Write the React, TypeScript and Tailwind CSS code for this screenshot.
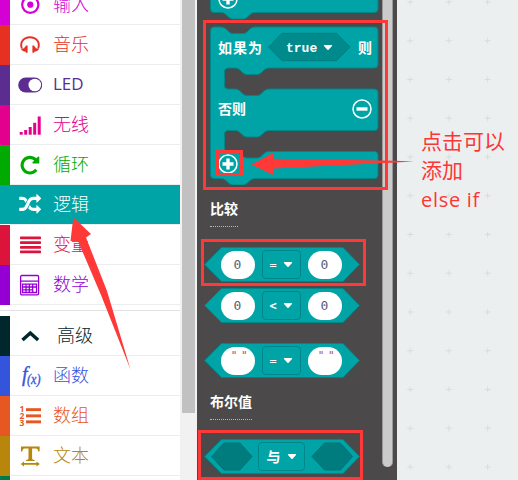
import React from "react";

const SHUFFLE =
  "M666 481q-60 92-137 273-22-45-37-72.5t-40.5-63.5-51-56.5-63-35-81.5-14.5h-224q-14 0-23-9t-9-23v-192q0-14 9-23t23-9h224q250 0 410 225zm1126 799q0 14-9 23l-320 320q-9 9-23 9-13 0-22.5-9.5t-9.5-22.5v-192q-32 0-85 .5t-81 1-73-1-71-5-64-10.5-63-18.5-58-28.5-59-40-55-53.5-56-69.5q59-93 136-273 22 45 37 72.5t40.5 63.5 51 56.5 63 35 81.5 14.5h256v-192q0-14 9-23t23-9q12 0 24 10l319 319q9 9 9 23zm0-896q0 14-9 23l-320 320q-9 9-23 9-13 0-22.5-9.5t-9.5-22.5v-192h-256q-48 0-87 15t-69 45-51 61.5-45 77.5q-32 62-78 171-29 66-49.5 111t-54 105-64 100-74 83-90 68.5-106.5 42-128 16.5h-224q-14 0-23-9t-9-23v-192q0-14 9-23t23-9h224q48 0 87-15t69-45 51-61.5 45-77.5q32-62 78-171 29-66 49.5-111t54-105 64-100 74-83 90-68.5 106.5-42 128-16.5h256v-192q0-14 9-23t23-9q12 0 24 10l319 319q9 9 9 23z";
const REPEAT =
  "M1664 256v448q0 26-19 45t-45 19h-448q-42 0-59-40-17-39 14-69l138-138q-148-137-349-137-104 0-198.5 40.5t-163.5 109.5-109.5 163.5-40.5 198.5 40.5 198.5 109.5 163.5 163.5 109.5 198.5 40.5q119 0 225-52t179-147q7-10 23-12 15 0 25 9l137 138q9 8 9.5 20.5t-7.5 22.5q-109 132-264 204.5t-327 72.5q-156 0-298-61t-245-164-164-245-61-298 61-298 164-245 245-164 298-61q147 0 284.5 55.5t244.5 156.5l130-129q29-31 70-14 39 17 39 59z";

// Every icon is drawn in a 24x24 box and takes the category's colour.
const icons: Record<string, React.ReactNode> = {
  input: (
    <>
      <circle cx="12.300" cy="11.700" r="8.100" fill="none" stroke="currentColor" strokeWidth="2.200" />
      <circle cx="12.300" cy="11.700" r="3.100" />
    </>
  ),
  music: (
    <>
      <path d="M3.800 15.500C1.500 9 6 4.300 12 4.300s10.500 4.700 8.200 11.200" fill="none" stroke="currentColor" strokeWidth="1.900" />
      <path d="M9.600 12.600v7.200H7.800v-1C5.500 18.500 3.500 17.500 3 15.700l3.200-.4c.4-1.200 1-1.900 1.600-2v-.7zM14.400 12.600v7.200h1.800v-1c2.300-.3 4.300-1.300 4.800-3.100l-3.200-.4c-.4-1.200-1-1.900-1.600-2v-.7z" />
    </>
  ),
  toggle: (
    <>
      <rect x="0.200" y="4.500" width="24" height="15" rx="7.500" />
      <circle cx="16.800" cy="12" r="6.300" fill="#fff" />
    </>
  ),
  signal: (
    <>
      <rect x="1.700" y="19" width="3" height="2.700" />
      <rect x="6.200" y="17" width="3" height="4.700" />
      <rect x="10.700" y="14" width="3" height="7.700" />
      <rect x="15.200" y="9.800" width="3" height="11.900" />
      <rect x="19.700" y="3.500" width="3" height="18.200" />
    </>
  ),
  loops: <path d={REPEAT} transform="translate(1 1.200) scale(.0122)" />,
  logic: <path d={SHUFFLE} transform="translate(1.200 .7) scale(.0122)" />,
  variables: (
    <>
      <rect x="2" y="3.500" width="21" height="2.800" rx=".7" />
      <rect x="2" y="8.200" width="21" height="2.800" rx=".7" />
      <rect x="2" y="12.900" width="21" height="2.800" rx=".7" />
      <rect x="2" y="17.500" width="21" height="2.800" rx=".7" />
    </>
  ),
  math: (
    <g fill="none" stroke="currentColor" strokeWidth="1.300">
      <rect x="2.600" y="2.500" width="18" height="19.300" rx="1.200" />
      <path d="M2.600 8.200h18M4.500 11.200h14v8.300H4.500zM4.500 14h14M4.500 16.800h9.500M8 11v8.500M11.300 11v8.500M14.700 11v8.500" />
    </g>
  ),
  advanced: <path d="M4.500 16 12.300 9l7.800 7" fill="none" stroke="currentColor" strokeWidth="3.500" />,
  functions: (
    <g className="font-['Liberation_Serif',serif] italic" stroke="currentColor" strokeWidth=".35">
      <text x="4" y="16.500" fontSize="20">f</text>
      <text x="9" y="19.500" fontSize="14" textLength="13.500" lengthAdjust="spacingAndGlyphs">(x)</text>
    </g>
  ),
  arrays: (
    <>
      <g className="font-['Open_Sans',sans-serif] leading-none font-bold" fontSize="8.500">
        <text x="1.600" y="7.800">1</text>
        <text x="1.600" y="15">2</text>
        <text x="1.600" y="22">3</text>
      </g>
      <rect x="8" y="4.200" width="15" height="2.900" />
      <rect x="8" y="10.400" width="15" height="2.900" />
      <rect x="8" y="16.400" width="15" height="2.900" />
    </>
  ),
  text: (
    <>
      <path d="M3 2.500h18.600v5h-1.200c-.5-2-.9-3.100-2.400-3.100h-3.900v10.200c0 1 .7 1.100 2.500 1.300v1.200H8v-1.200c1.800-.2 2.500-.3 2.500-1.300V4.400H6.600c-1.500 0-1.900 1.100-2.400 3.100H3z" />
      <path d="M2.800 19.900 6 17.400v1.700h12.500v-1.700l3.300 2.500-3.300 2.500v-1.700H6v1.700z" />
    </>
  ),
};

interface Category {
  name: string;
  icon: string;
  strip: string;
  tint: string;
}

const basic: Category[] = [
  { name: "输入", icon: "input", strip: "bg-[#d400d4]", tint: "text-[#d400d4]" },
  { name: "音乐", icon: "music", strip: "bg-[#e63022]", tint: "text-[#e63022]" },
  { name: "LED", icon: "toggle", strip: "bg-[#5c2d91]", tint: "text-[#5c2d91]" },
  { name: "无线", icon: "signal", strip: "bg-[#e3008c]", tint: "text-[#e3008c]" },
  { name: "循环", icon: "loops", strip: "bg-[#00aa00]", tint: "text-[#00aa00]" },
  { name: "逻辑", icon: "logic", strip: "bg-[#00a4a6]", tint: "text-white" },
  { name: "变量", icon: "variables", strip: "bg-[#dc143c]", tint: "text-[#dc143c]" },
  { name: "数学", icon: "math", strip: "bg-[#9400d3]", tint: "text-[#9400d3]" },
];
const more: Category[] = [
  { name: "高级", icon: "advanced", strip: "bg-[#00272b]", tint: "text-[#00272b]" },
  { name: "函数", icon: "functions", strip: "bg-[#3455db]", tint: "text-[#3455db]" },
  { name: "数组", icon: "arrays", strip: "bg-[#e65722]", tint: "text-[#e65722]" },
  { name: "文本", icon: "text", strip: "bg-[#b8860b]", tint: "text-[#b8860b]" },
  { name: "", icon: "", strip: "bg-[#007a4b]", tint: "" },
];

function Row({ item }: { item: Category }) {
  const active = item.icon === "logic";
  const wide = item.icon === "advanced";
  return (
    <div className="flex h-10 shrink-0">
      <div className={`w-2.5 ${active ? "h-[39px]" : "h-10"} ${item.strip}`} />
      <div
        className={`flex flex-1 items-center border-b border-[#ecedee] pl-2 ${item.tint} ${active ? "bg-[#00a4a6]" : "bg-white"}`}
      >
        <svg width="24" height="24" viewBox="0 0 24 24" fill="currentColor" className="shrink-0">
          {icons[item.icon]}
        </svg>
        <span
          className={`pb-[3px] leading-none whitespace-nowrap ${item.name === "LED" ? "font-['Open_Sans',sans-serif] text-[17px]" : "text-[18px] font-light"} ${wide ? "ml-[15px]" : "ml-[11px]"}`}
        >
          {item.name}
        </span>
      </div>
    </div>
  );
}

function Sidebar() {
  return (
    <aside className="flex w-[197px] shrink-0 overflow-hidden bg-[#f1f1f1]">
      <div className="-mt-[15px] flex w-[180px] flex-col bg-white">
        {basic.map((c) => (
          <Row key={c.name} item={c} />
        ))}
        <div className="mb-[5px] h-1.5 shrink-0 border-b border-[#dfe1e2]" />
        {more.map((c) => (
          <Row key={c.icon} item={c} />
        ))}
      </div>
      <div className="ml-0.5 h-[413px] w-[13px] bg-[#c1c1c1]" />
    </aside>
  );
}

function Caret() {
  return (
    <svg width="10" height="7" viewBox="0 0 10 7">
      <path d="M1.300 1h7.400q.8.300.3 1L5.600 5.700q-.6.500-1.200 0L1 2q-.5-.7.300-1" fill="#fff" />
    </svg>
  );
}

function Badge({ minus }: { minus?: boolean }) {
  return (
    <svg width="20" height="20" viewBox="0 0 20 20" stroke="#fff" fill="none">
      <circle cx="10" cy="10" r="9" strokeWidth="1.500" />
      <path d={minus ? "M4.500 10h11" : "M4.500 10h11M10 4.500v11"} strokeWidth="3.400" />
    </svg>
  );
}

function IfBlock() {
  return (
    <div className="relative mt-2 ml-[13px] h-[159px] w-[169px]">
      <svg className="absolute inset-0" width="169" height="159" viewBox="210 26 169 159">
        <path
          d="M214 27h7q3 0 5 2l3 3q2 1.500 4 1.500h10q2 0 4-1.500l3-3q2-2 5-2h119.500q3.500 0 3.500 3.500v34q0 3.500-3.500 3.500H269q-3 0-5 2l-3 3q-2 1.500-4 1.500h-10q-2 0-4-1.500l-3-3q-2-2-5-2h-7q-3.500 0-3.500 3.500v14q0 3.500 3.500 3.500h7q3 0 5 2l3 3q2 1.500 4 1.500h10q2 0 4-1.500l3-3q2-2 5-2h105.500q3.500 0 3.500 3.500v34.500q0 3.500-3.500 3.500H269q-3 0-5 2l-3 3q-2 1.500-4 1.500h-10q-2 0-4-1.500l-3-3q-2-2-5-2h-7q-3.500 0-3.500 3.500v14q0 3.500 3.500 3.500h7q3 0 5 2l3 3q2 1.500 4 1.500h10q2 0 4-1.500l3-3q2-2 5-2h105.500q3.500 0 3.500 3.500v20q0 3.500-3.500 3.500H255q-3 0-5 2l-3 3q-2 1.500-4 1.500h-10q-2 0-4-1.500l-3-3q-2-2-5-2h-7q-3.500 0-3.500-3.500V30.500q0-3.500 3.500-3.500"
          fill="#00a4a6"
          stroke="#008689"
        />
        <path d="M268.500 47 282 33.300h54.500L350 47l-13.500 13.700H282z" fill="#008a8c" stroke="#007f82" />
      </svg>
      <div className="relative flex h-[42px] items-center pl-2 text-[14px] font-bold text-white">
        <span className="w-[68px] tracking-[1px]">如果为</span>
        <span className="mr-[6px] w-[31px] pt-[3px] font-['Liberation_Mono',monospace] text-[13px]">true</span>
        <Caret />
        <span className="ml-[25px]">则</span>
      </div>
      <div className="relative mt-5 flex h-[41px] items-center justify-between pr-[7px] pl-2 text-[14px] font-bold text-white">
        <span>否则</span>
        <Badge minus />
      </div>
      <div className="relative mt-[25px] ml-2">
        <Badge />
      </div>
    </div>
  );
}

function Oval({ children }: { children: string }) {
  const quote = children !== "0";
  return (
    <span
      className={`flex h-[28px] w-[34px] justify-center rounded-[14px] bg-white font-['DejaVu_Sans_Mono',monospace] ${quote ? "items-start pt-px pl-0.5 text-[11px] leading-[15px] tracking-[-1.500px] whitespace-pre text-[#a34f70]" : "items-center pt-px text-[13px] text-[#575e75]"}`}
    >
      {children}
    </span>
  );
}

function HexBlock({ op, value }: { op: string; value?: string }) {
  const slots = value === undefined;
  return (
    <div className="relative h-[35px] w-[156px]">
      <svg className="absolute inset-0" width="156" height="35" viewBox="0 0 156 35">
        <path d="M.7 17.500 17.500.5h121.500l16.500 17-16.500 17H17.500z" fill="#00a4a6" stroke="#008689" />
        {slots && (
          <path d="M7.500 17.500 20 4h16l12 13.500L36 31H20zM108 17.500 120.500 4h16l12 13.500-12 13.500h-16z" fill="#007c7f" stroke="#007376" />
        )}
      </svg>
      <div className={`relative flex h-full items-center ${slots ? "justify-center pr-0.5" : "justify-between pr-[18px] pl-[17px]"}`}>
        {value !== undefined && <Oval>{value}</Oval>}
        <span
          className={`flex h-[29px] items-center justify-between rounded-[4px] border border-[#008689] text-white ${slots ? "w-[47px] pr-[7px] pl-2 text-[14px] font-bold" : "w-[39px] pr-[7px] pl-[7px] font-['DejaVu_Sans_Mono',monospace] text-[12px]"} ${op === "<" ? "font-bold" : ""}`}
        >
          {op}
          <Caret />
        </span>
        {value !== undefined && <Oval>{value}</Oval>}
      </div>
    </div>
  );
}

function Label({ children }: { children: string }) {
  return (
    <div className="ml-[13px] flex">
      <span className="h-[27px] border-b border-dotted border-[#bbb] text-[14px] leading-[17px] font-bold text-white">{children}</span>
    </div>
  );
}

function Flyout() {
  return (
    <section className="flex w-[200px] shrink-0 overflow-hidden bg-[#4b4949]">
      <div className="flex w-[185px] flex-col">
        <div className="relative ml-[13px] h-[18px] shrink-0">
          <svg className="absolute top-0 left-0" width="169" height="20" viewBox="210 0 169 20">
            <path
              d="M210.500-5V9q0 3.500 3.500 3.500h7q3 0 5 2l3 3q2 1.500 4 1.500h10q2 0 4-1.500l3-3q2-2 5-2h119.500q3.500 0 3.500-3.500V-5z"
              fill="#00a4a6"
              stroke="#008689"
            />
          </svg>
          <div className="relative -mt-[11px] ml-2 h-5">
            <Badge />
          </div>
        </div>
        <IfBlock />
        <div className="mt-[15px]">
          <Label>比较</Label>
        </div>
        <div className="mt-5 ml-[6.500px] flex flex-col">
          <HexBlock op="=" value="0" />
          <div className="mt-1.5">
            <HexBlock op="<" value="0" />
          </div>
          <div className="mt-5">
            <HexBlock op="=" value={'" "'} />
          </div>
        </div>
        <div className="mt-[15px]">
          <Label>布尔值</Label>
        </div>
        <div className="mt-[19px] ml-[7px]">
          <HexBlock op="与" />
        </div>
      </div>
      <div className="h-[467px] w-[11px] rounded-b-[5px] border-x border-[#999] bg-[#cbcbcb]" />
    </section>
  );
}

function Workspace() {
  return (
    <main className="flex-1 bg-[#ebeff0]">
      <div className="relative h-full">
        <svg className="absolute inset-0 h-full w-full">
          <defs>
            <pattern id="grid" x="-6.300" y="-17.400" width="38.750" height="38.750" patternUnits="userSpaceOnUse">
              <path d="M16.500 19.400h6M19.500 16.400v6" stroke="#d8dcdd" strokeWidth="1" />
            </pattern>
          </defs>
          <rect width="100%" height="100%" fill="url(#grid)" />
        </svg>
        <p className="relative pt-[127px] pl-6 font-['Open_Sans','Noto_Sans_CJK_SC',sans-serif] text-[21px] leading-[29px] font-normal whitespace-nowrap text-[#ff3535]">
          点击可以
          <br />
          添加
          <br />
          <span className="text-[20px] tracking-[.7px]">else if</span>
        </p>
      </div>
    </main>
  );
}

// Red frames and arrows laid over the editor.
function Annotations() {
  return (
    <>
      <div className="absolute top-[20px] left-[203px] h-[170px] w-[185px] border-3 border-[#ff3838]" />
      <div className="absolute top-[150px] left-[216px] h-[26px] w-[27px] border-3 border-[#ff3838]" />
      <div className="absolute top-[239px] left-[201px] h-[47px] w-[165px] border-3 border-[#ff3838]" />
      <div className="absolute top-[430px] left-[198px] h-[50px] w-[165px] border-3 border-[#ff3838]" />
      <svg className="absolute inset-0" width="518" height="480" fill="#ff3838">
        <path d="M251.500 164.500 273 153v5.800l122 1.900 19 .9-19 1-121 6v6.600z" />
        <path d="M73.300 217.300 91 234l-5 3.500L107 291l23.500 78.500L101 295l-23-54-7.500 0z" />
      </svg>
    </>
  );
}

export default function App() {
  return (
    <div className="relative flex h-[480px] w-[518px] overflow-hidden bg-white font-['Noto_Sans_CJK_SC',sans-serif]">
      <Sidebar />
      <Flyout />
      <Workspace />
      <Annotations />
    </div>
  );
}
